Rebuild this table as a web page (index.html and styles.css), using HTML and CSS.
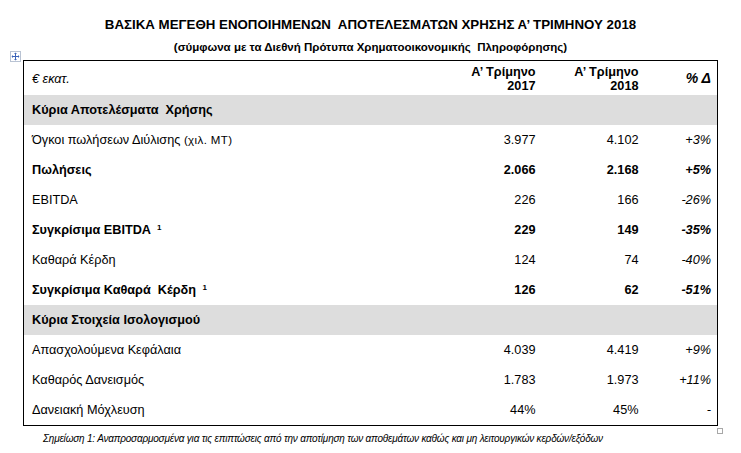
FILE: index.html
```html
<!DOCTYPE html>
<html lang="el">
<head>
  <meta charset="UTF-8" />
  <title>Βασικά μεγέθη Α' Τριμήνου 2018</title>
  <link rel="stylesheet" href="styles.css">
</head>
<body>

<h2>ΒΑΣΙΚΑ ΜΕΓΕΘΗ ΕΝΟΠΟΙΗΜΕΝΩΝ&nbsp; ΑΠΟΤΕΛΕΣΜΑΤΩΝ ΧΡΗΣΗΣ Α’ ΤΡΙΜΗΝΟΥ 2018</h2>
<div class="subtitle">(σύμφωνα με τα Διεθνή Πρότυπα Χρηματοοικονομικής&nbsp; Πληροφόρησης)</div>

<div class="table-wrap">
  <span class="move-handle">
    <svg width="11" height="11" viewBox="0 0 11 11" xmlns="http://www.w3.org/2000/svg">
      <rect x="0.5" y="0.5" width="10" height="10" fill="#fff" stroke="#b9c3d3"/>
      <path d="M5.5 2v7M2 5.5h7" stroke="#3b63b8" stroke-width="1"/>
      <path d="M5.5 1.5l-1.5 1.5h3zM5.5 9.5l-1.5-1.5h3zM1.5 5.5l1.5-1.5v3zM9.5 5.5l-1.5-1.5v3z" fill="#3b63b8"/>
    </svg>
  </span>

  <table class="results">
    <colgroup>
      <col class="c-label">
      <col class="c-2017">
      <col class="c-2018">
      <col class="c-diff">
    </colgroup>
    <thead>
      <tr>
        <th class="unit">€ εκατ.</th>
        <th class="num">Α’ Τρίμηνο<br>2017</th>
        <th class="num">Α’ Τρίμηνο<br>2018</th>
        <th class="diff">% Δ</th>
      </tr>
    </thead>
    <tbody>
      <tr class="section"><td colspan="4">Κύρια Αποτελέσματα&nbsp; Χρήσης</td></tr>
      <tr>
        <td>Όγκοι πωλήσεων Διύλισης <span class="small">(χιλ. ΜΤ)</span></td>
        <td class="num">3.977</td><td class="num">4.102</td><td class="diff">+3%</td>
      </tr>
      <tr class="strong">
        <td>Πωλήσεις</td>
        <td class="num">2.066</td><td class="num">2.168</td><td class="diff">+5%</td>
      </tr>
      <tr>
        <td>EBITDA</td>
        <td class="num">226</td><td class="num">166</td><td class="diff">-26%</td>
      </tr>
      <tr class="strong">
        <td>Συγκρίσιμα EBITDA <sup>1</sup></td>
        <td class="num">229</td><td class="num">149</td><td class="diff">-35%</td>
      </tr>
      <tr>
        <td>Καθαρά Κέρδη</td>
        <td class="num">124</td><td class="num">74</td><td class="diff">-40%</td>
      </tr>
      <tr class="strong">
        <td>Συγκρίσιμα Καθαρά&nbsp; Κέρδη <sup>1</sup></td>
        <td class="num">126</td><td class="num">62</td><td class="diff">-51%</td>
      </tr>
      <tr class="section"><td colspan="4">Κύρια Στοιχεία Ισολογισμού</td></tr>
      <tr>
        <td>Απασχολούμενα Κεφάλαια</td>
        <td class="num">4.039</td><td class="num">4.419</td><td class="diff">+9%</td>
      </tr>
      <tr>
        <td>Καθαρός Δανεισμός</td>
        <td class="num">1.783</td><td class="num">1.973</td><td class="diff">+11%</td>
      </tr>
      <tr>
        <td>Δανειακή Μόχλευση</td>
        <td class="num">44%</td><td class="num">45%</td><td class="diff">-</td>
      </tr>
    </tbody>
  </table>

  <span class="resize-handle"></span>
</div>

<p class="note">Σημείωση 1: Αναπροσαρμοσμένα για τις επιπτώσεις από την αποτίμηση των αποθεμάτων καθώς και μη λειτουργικών κερδών/εξόδων</p>

</body>
</html>
```

FILE: styles.css
```css
body {
  font-family: 'Liberation Sans', Arial, sans-serif;
  margin: 0;
  background: #fff;
  color: #000;
}
h2 {
  text-align: center;
  font-size: 13.3px;
  font-weight: 700;
  margin: 0;
  padding-top: 17px;
  line-height: 16px;
}
.subtitle {
  text-align: center;
  font-size: 11.5px;
  font-weight: 700;
  margin-top: 7px;
  line-height: 14px;
}
.table-wrap {
  position: relative;
  margin: 6px 0 0 23px;
  width: 694px;
}
.move-handle {
  position: absolute;
  left: -13px;
  top: -9px;
  line-height: 0;
}
.resize-handle {
  position: absolute;
  right: -6px;
  bottom: -8px;
  width: 4px;
  height: 4px;
  border: 1px solid #a8a8a8;
}
.results {
  width: 100%;
  border-collapse: collapse;
  border: 1px solid #000;
  font-size: 12.7px;
  table-layout: fixed;
}
.c-label { width: 417px; }
.c-2017 { width: 100px; }
.c-2018 { width: 103px; }
.c-diff { width: 74px; }
.results th {
  height: 32px;
  padding: 0;
  font-weight: 700;
  line-height: 14px;
  vertical-align: middle;
}
.results th.unit {
  text-align: left;
  font-weight: 400;
  font-style: italic;
  padding-left: 8px;
  padding-top: 1px;
}
.results th.num {
  text-align: right;
  padding-right: 5px;
  padding-top: 2px;
}
.results th.diff {
  text-align: right;
  font-style: italic;
  font-size: 14px;
  padding-right: 6px;
}
.results td {
  height: 30px;
  padding: 0 0 0 8px;
  vertical-align: middle;
}
.results td.num {
  text-align: right;
  padding-right: 5px;
}
.results td.diff {
  text-align: right;
  font-style: italic;
  padding-right: 6px;
}
.results tr.strong td {
  font-weight: 700;
}
.results tr.section td {
  background: #dddddd;
  font-weight: 700;
  height: 30px;
}
.small {
  font-size: 11.5px;
  letter-spacing: 0.4px;
}
sup {
  font-size: 8px;
  margin-left: 3px;
  vertical-align: 4px;
  line-height: 0;
}
.note {
  margin: 7px 0 0 43px;
  font-size: 10px;
  font-style: italic;
  letter-spacing: -0.2px;
}
```
